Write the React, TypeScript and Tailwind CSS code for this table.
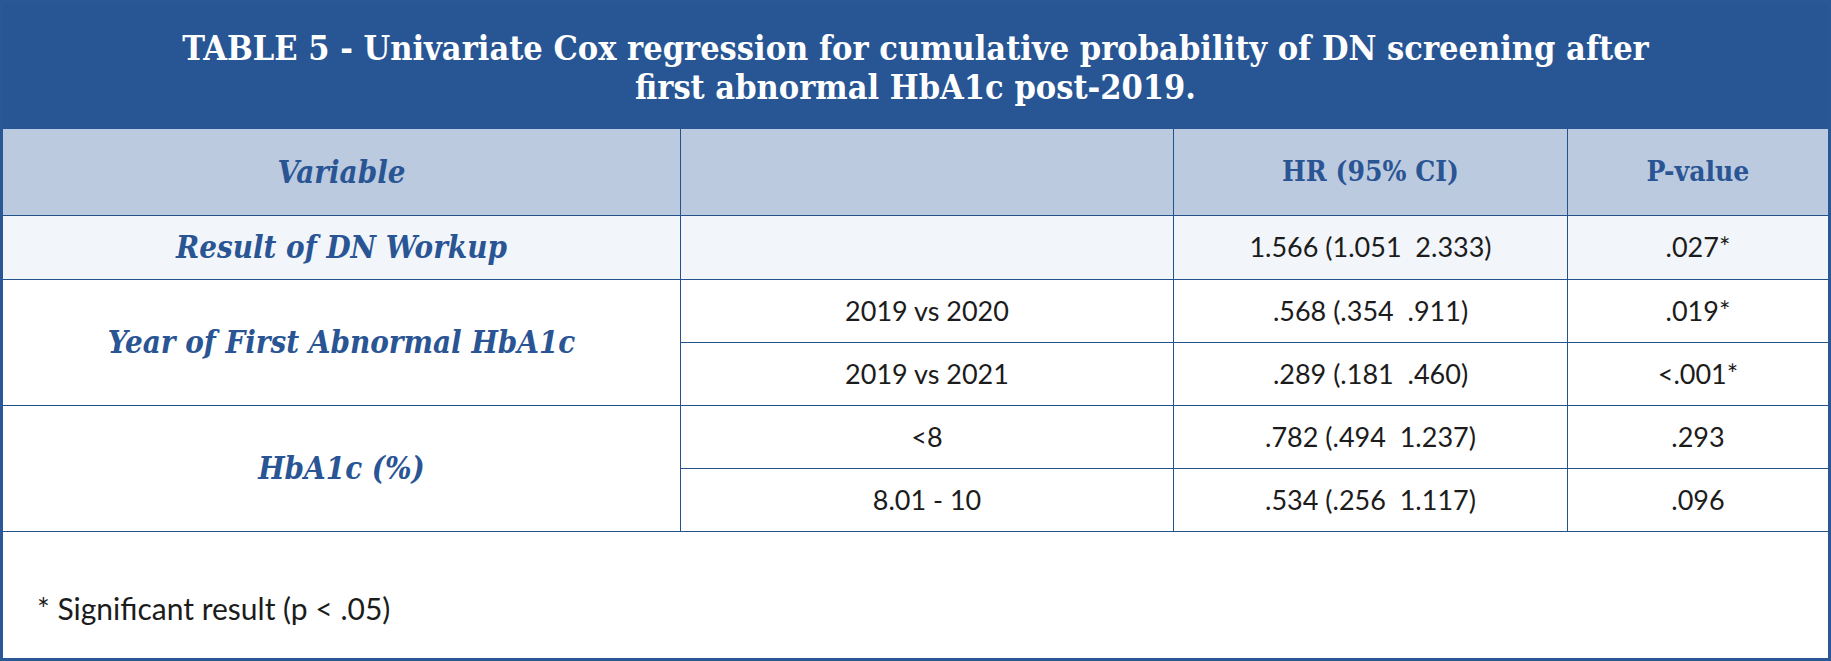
import React from "react";

const serif = "font-['DejaVu_Serif','Liberation_Serif',serif] font-stretch-condensed";
const sans = "font-['Lato','Open_Sans',sans-serif]";

const labelCls = `${serif} font-bold italic text-[31px] text-[#2a5594]`;
const headCls = `${serif} font-bold text-[28px] text-[#2a5594]`;
const valueCls = `${sans} text-[27px] text-[#1c1c1c]`;
const line = "border-[#24528d]";

interface SubRow {
  group: string;
  hr: string;
  p: string;
}

const yearRows: SubRow[] = [
  { group: "2019 vs 2020", hr: ".568 (.354  .911)", p: ".019*" },
  { group: "2019 vs 2021", hr: ".289 (.181  .460)", p: "<.001*" },
];

const hbRows: SubRow[] = [
  { group: "<8", hr: ".782 (.494  1.237)", p: ".293" },
  { group: "8.01 - 10", hr: ".534 (.256  1.117)", p: ".096" },
];

function Cell({ children, className = "" }: { children?: React.ReactNode; className?: string }) {
  return (
    <div className={`flex items-center justify-center border-b ${line} ${className}`}>
      {children}
    </div>
  );
}

function GroupRows({ label, rows }: { label: string; rows: SubRow[] }) {
  return (
    <>
      <Cell className={`row-span-2 border-r ${labelCls}`}>{label}</Cell>
      {rows.map((r) => (
        <React.Fragment key={r.group}>
          <Cell className={`border-r whitespace-pre ${valueCls}`}>{r.group}</Cell>
          <Cell className={`border-r whitespace-pre ${valueCls}`}>{r.hr}</Cell>
          <Cell className={`whitespace-pre ${valueCls}`}>{r.p}</Cell>
        </React.Fragment>
      ))}
    </>
  );
}

export default function App() {
  return (
    <div className="w-[1831px] h-[661px] bg-white">
      <div className="flex flex-col w-full h-full border-[3px] border-[#2a5796]">
        <div className={`h-[126px] shrink-0 bg-[#285694] flex items-center justify-center pt-[4px] text-center text-white font-bold text-[34px] leading-[39px] ${serif}`}>
          <p>
            TABLE 5 - Univariate Cox regression for cumulative probability of DN screening after
            <br />
            first abnormal HbA1c post-2019.
          </p>
        </div>

        <div className="grid grid-cols-[678px_493px_394px_1fr] grid-rows-[87px_64px_63px_63px_63px_63px] shrink-0">
          <Cell className={`bg-[#bccadf] border-r ${labelCls}`}>Variable</Cell>
          <Cell className="bg-[#bccadf] border-r" />
          <Cell className={`bg-[#bccadf] border-r ${headCls}`}>HR (95% CI)</Cell>
          <Cell className={`bg-[#bccadf] ${headCls}`}>P-value</Cell>

          <Cell className={`bg-[#f2f6fa] border-r ${labelCls}`}>Result of DN Workup</Cell>
          <Cell className="bg-[#f2f6fa] border-r" />
          <Cell className={`bg-[#f2f6fa] border-r whitespace-pre ${valueCls}`}>1.566 (1.051  2.333)</Cell>
          <Cell className={`bg-[#f2f6fa] ${valueCls}`}>.027*</Cell>

          <GroupRows label="Year of First Abnormal HbA1c" rows={yearRows} />
          <GroupRows label="HbA1c (%)" rows={hbRows} />
        </div>

        <div className="flex-1 pl-[34px] pt-[59px]">
          <p className={`${sans} text-[30px] text-[#1c1c1c] leading-[34px]`}>* Significant result (p &lt; .05)</p>
        </div>
      </div>
    </div>
  );
}
